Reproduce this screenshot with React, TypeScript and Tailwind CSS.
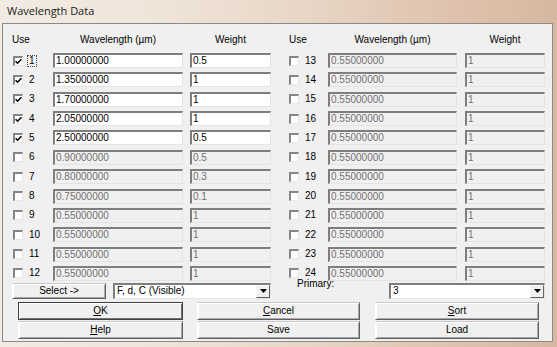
import React from "react";

const FONT = "font-['Liberation_Sans',Arial,sans-serif]";

type Row = { n: number; wl: string; wt: string; on: boolean };

const leftRows: Row[] = [
  { n: 1, wl: "1.00000000", wt: "0.5", on: true },
  { n: 2, wl: "1.35000000", wt: "1", on: true },
  { n: 3, wl: "1.70000000", wt: "1", on: true },
  { n: 4, wl: "2.05000000", wt: "1", on: true },
  { n: 5, wl: "2.50000000", wt: "0.5", on: true },
  { n: 6, wl: "0.90000000", wt: "0.5", on: false },
  { n: 7, wl: "0.80000000", wt: "0.3", on: false },
  { n: 8, wl: "0.75000000", wt: "0.1", on: false },
  { n: 9, wl: "0.55000000", wt: "1", on: false },
  { n: 10, wl: "0.55000000", wt: "1", on: false },
  { n: 11, wl: "0.55000000", wt: "1", on: false },
  { n: 12, wl: "0.55000000", wt: "1", on: false },
];

const rightRows: Row[] = Array.from({ length: 12 }, (_, i) => ({
  n: 13 + i,
  wl: "0.55000000",
  wt: "1",
  on: false,
}));

function Check({ checked }: { checked: boolean }) {
  return (
    <div className="relative w-[10px] h-[10px] bg-white border-t-2 border-l-2 border-b border-r border-t-[#858585] border-l-[#858585] border-b-[#e6e6e6] border-r-[#e6e6e6]">
      {checked && (
        <svg className="absolute left-0 top-0" width="7" height="7" viewBox="0 0 7 7">
          <path d="M0.6 3.2 L2.6 5.2 L6.4 1.2" stroke="#000" strokeWidth="1.6" fill="none" />
        </svg>
      )}
    </div>
  );
}

function Field({ value, on, w }: { value: string; on: boolean; w: string }) {
  return (
    <div
      className={`${w} h-[15px] flex items-center pl-[1px] border-t-2 border-l-2 border-b border-r border-t-[#7e7e7e] border-l-[#7e7e7e] border-b-[#e4e4e4] border-r-[#e4e4e4] text-[10px] leading-none ${
        on ? "bg-white text-black" : "bg-[#f0f0f0] text-[#707070]"
      }`}
    >
      {value}
    </div>
  );
}

function Half({ rows, right }: { rows: Row[]; right?: boolean }) {
  const c1 = right ? "w-[16px]" : "w-[17px] pl-[1px]";
  const c2 = right ? "w-[23px]" : "w-[24px]";
  const f1 = right ? "w-[129px]" : "w-[130px]";
  const gap = right ? "ml-[8px]" : "ml-[7px]";
  const f2 = right ? "w-[80px]" : "w-[81px]";
  return (
    <div className="flex flex-col">
      <div className="flex items-center h-[15px] text-[10px] text-black">
        <div className={`${right ? "w-[39px]" : "w-[41px]"}`}>Use</div>
        <div className={`${f1} text-center`}>Wavelength (µm)</div>
        <div className={`${gap} ${f2} text-center`}>Weight</div>
      </div>
      <div className="flex flex-col gap-[4.36px] mt-[6px]">
        {rows.map((r) => (
          <div key={r.n} className="flex items-center h-[15px]">
            <div className={`${c1} flex items-center`}>
              <Check checked={r.on} />
            </div>
            <div className={`${c2} text-[10px] text-black leading-none`}>
              {r.n === 1 ? (
                <span className="inline-block border border-dotted border-[#444] px-[1px] -ml-[2px]">1</span>
              ) : (
                r.n
              )}
            </div>
            <Field value={r.wl} on={r.on} w={f1} />
            <div className={gap}>
              <Field value={r.wt} on={r.on} w={f2} />
            </div>
          </div>
        ))}
      </div>
    </div>
  );
}

function Btn({ children, w, def }: { children: React.ReactNode; w: string; def?: boolean }) {
  return (
    <div
      className={`${w} h-full flex items-center justify-center bg-[#f0f0f0] text-[10px] text-black border ${
        def
          ? "border-[#404040] shadow-[inset_1px_1px_0_#ffffff,inset_-1px_-1px_0_#707070]"
          : "border-t-[#c8c8c8] border-l-[#ffffff] border-b-[#606060] border-r-[#606060] shadow-[inset_1px_1px_0_#ffffff,inset_-1px_-1px_0_#a8a8a8]"
      }`}
    >
      {children}
    </div>
  );
}

function Combo({ value, w }: { value: string; w: string }) {
  return (
    <div className={`${w} h-[16px] flex items-stretch bg-white border-t-2 border-l-2 border-b border-r border-t-[#7e7e7e] border-l-[#7e7e7e] border-b-[#e4e4e4] border-r-[#e4e4e4]`}>
      <div className="flex-1 flex items-center pl-[2px] text-[10px] text-black leading-none">{value}</div>
      <div className="w-[14px] flex items-center justify-center bg-[#f0f0f0] border border-t-[#f8f8f8] border-l-[#f8f8f8] border-b-[#606060] border-r-[#606060]">
        <svg width="7" height="4" viewBox="0 0 7 4">
          <path d="M0 0 H7 L3.5 4 Z" fill="#000" />
        </svg>
      </div>
    </div>
  );
}

export default function App() {
  return (
    <div
      className={`${FONT} w-[557px] h-[347px] overflow-hidden flex flex-col bg-[linear-gradient(90deg,#f2ebe3_0%,#efe4d8_30%,#e8d6c6_55%,#dfc3ae_80%,#d8b7a0_100%)]`}
    >
      <div className="h-[23px] flex items-center pl-[7px] font-['Open_Sans',sans-serif] text-[11px] text-[#1a1a1a]">
        Wavelength Data
      </div>
      <div className="ml-[2px] w-[551px] h-[319px] border border-[#8a8a8a] bg-[#f0f0f0] flex flex-col">
        <div className="flex pl-[9px] mt-[8px]">
          <Half rows={leftRows} />
          <div className="ml-[18px]">
            <Half rows={rightRows} right />
          </div>
        </div>
        <div className="flex items-start pl-[9px] mt-[2px] h-[16px]">
          <div className="h-[16px] flex">
            <Btn w="w-[94px]">Select -&gt;</Btn>
          </div>
          <div className="ml-[7px]">
            <Combo value="F, d, C (Visible)" w="w-[158px]" />
          </div>
          <div className="ml-[26px] w-[92px] -mt-[5px] text-[10px] text-black leading-[12px]">Primary:</div>
          <Combo value="3" w="w-[156px]" />
        </div>
        <div className="flex pl-[15px] mt-[3px] h-[18px]">
          <Btn w="w-[165px]" def>
            <span className="underline">O</span>K
          </Btn>
          <div className="ml-[14px] h-full flex">
            <Btn w="w-[163px]">
              <span className="underline">C</span>ancel
            </Btn>
          </div>
          <div className="ml-[15px] h-full flex">
            <Btn w="w-[164px]">
              <span className="underline">S</span>ort
            </Btn>
          </div>
        </div>
        <div className="flex pl-[15px] mt-[1px] h-[18px]">
          <Btn w="w-[165px]">
            <span className="underline">H</span>elp
          </Btn>
          <div className="ml-[14px] h-full flex">
            <Btn w="w-[163px]">Save</Btn>
          </div>
          <div className="ml-[15px] h-full flex">
            <Btn w="w-[164px]">Load</Btn>
          </div>
        </div>
      </div>
    </div>
  );
}
